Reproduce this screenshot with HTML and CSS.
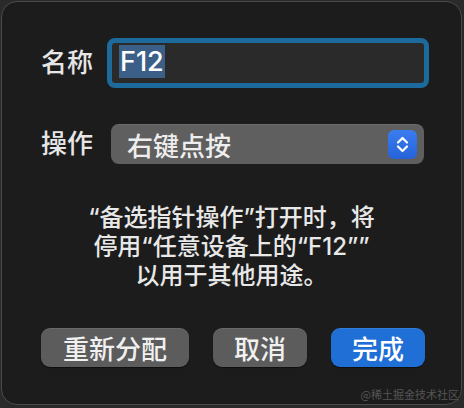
FILE: index.html
```html
<!DOCTYPE html>
<html lang="zh-CN">
<head>
<meta charset="utf-8">
<link rel="stylesheet" href="styles.css">
</head>
<body>
<div class="panel">
  <div class="row row-name">
    <span class="label">名称</span>
    <div class="field"><span class="sel">F12</span></div>
  </div>
  <div class="row row-op">
    <span class="label">操作</span>
    <div class="popup">
      <span class="popup-text">右键点按</span>
      <span class="stepper">
        <svg width="29" height="29" viewBox="0 0 29 29"><path d="M10 12.5 L14.5 8 L19 12.5 M10 16.5 L14.5 21 L19 16.5" fill="none" stroke="#fff" stroke-width="2.2" stroke-linecap="round" stroke-linejoin="round"/></svg>
      </span>
    </div>
  </div>
  <p class="desc">“备选指针操作”打开时，将<br>停用“任意设备上的“F12””<br>以用于其他用途。</p>
  <div class="buttons">
    <button class="btn btn-wide">重新分配</button>
    <button class="btn">取消</button>
    <button class="btn btn-primary">完成</button>
  </div>
  <span class="watermark">@稀土掘金技术社区</span>
</div>
</body>
</html>
```
FILE: styles.css
```css
html, body {
  margin: 0;
  padding: 0;
  background: #2a2a2a;
}
body {
  padding: 1px;
  width: 464px;
  height: 408px;
  box-sizing: border-box;
  font-family: "Inter", "Noto Sans CJK SC", sans-serif;
  font-weight: 500;
  color: #e8e8e8;
}
.panel {
  position: relative;
  box-sizing: border-box;
  width: 461px;
  height: 404px;
  background: #1c1c1c;
  border: 1px solid #4a4a4a;
  border-radius: 16px;
  padding: 36px 0 0 39px;
}
.row {
  display: flex;
  align-items: center;
}
.label {
  width: 66px;
  font-size: 26px;
  line-height: 30px;
  color: #e6e6e6;
}
.row-op .label {
  width: 70px;
}
.field {
  box-sizing: border-box;
  width: 322px;
  height: 50px;
  border: 5px solid #1d6a9c;
  border-radius: 8px;
  background: #2a2a2a;
  padding: 2px 0 0 7px;
  display: flex;
  align-items: flex-start;
}
.sel {
  background: #3c5f87;
  color: #fff;
  font-family: "Inter", sans-serif;
  font-size: 27px;
  line-height: 33px;
  height: 33px;
  padding: 0 1px;
}
.row-op {
  margin-top: 36px;
}
.popup {
  box-sizing: border-box;
  width: 313px;
  height: 40px;
  background: #5f5f5f;
  border-radius: 8px;
  display: flex;
  align-items: center;
  justify-content: space-between;
  padding: 0 7px 0 16px;
  box-shadow: inset 0 1px 0 rgba(255,255,255,0.08);
}
.popup-text {
  font-size: 26px;
  color: #eeeeee;
}
.stepper {
  width: 29px;
  height: 29px;
  border-radius: 6px;
  background: linear-gradient(#3a7df0, #2563d8);
  display: flex;
}
.desc {
  margin: 39px 39px 0 0;
  text-align: center;
  font-size: 24px;
  line-height: 29px;
  color: #e8e8e8;
}
.buttons {
  display: flex;
  gap: 24px;
  margin-top: 38px;
}
.btn {
  box-sizing: border-box;
  width: 94px;
  height: 39px;
  border: none;
  border-radius: 9px;
  background: #5c5c5c;
  color: #f0f0f0;
  font-family: "Noto Sans CJK SC", sans-serif;
  font-weight: 500;
  font-size: 26px;
  line-height: 39px;
  padding: 0;
  box-shadow: 0 1px 1px rgba(0,0,0,0.5), inset 0 1px 0 rgba(255,255,255,0.08);
}
.btn-wide {
  width: 148px;
}
.btn-primary {
  background: #1f6fd6;
  color: #ffffff;
}
.watermark {
  position: absolute;
  right: 2px;
  bottom: 2px;
  font-family: "Noto Sans CJK SC", sans-serif;
  font-weight: 400;
  font-size: 11px;
  color: #555;
}
```
